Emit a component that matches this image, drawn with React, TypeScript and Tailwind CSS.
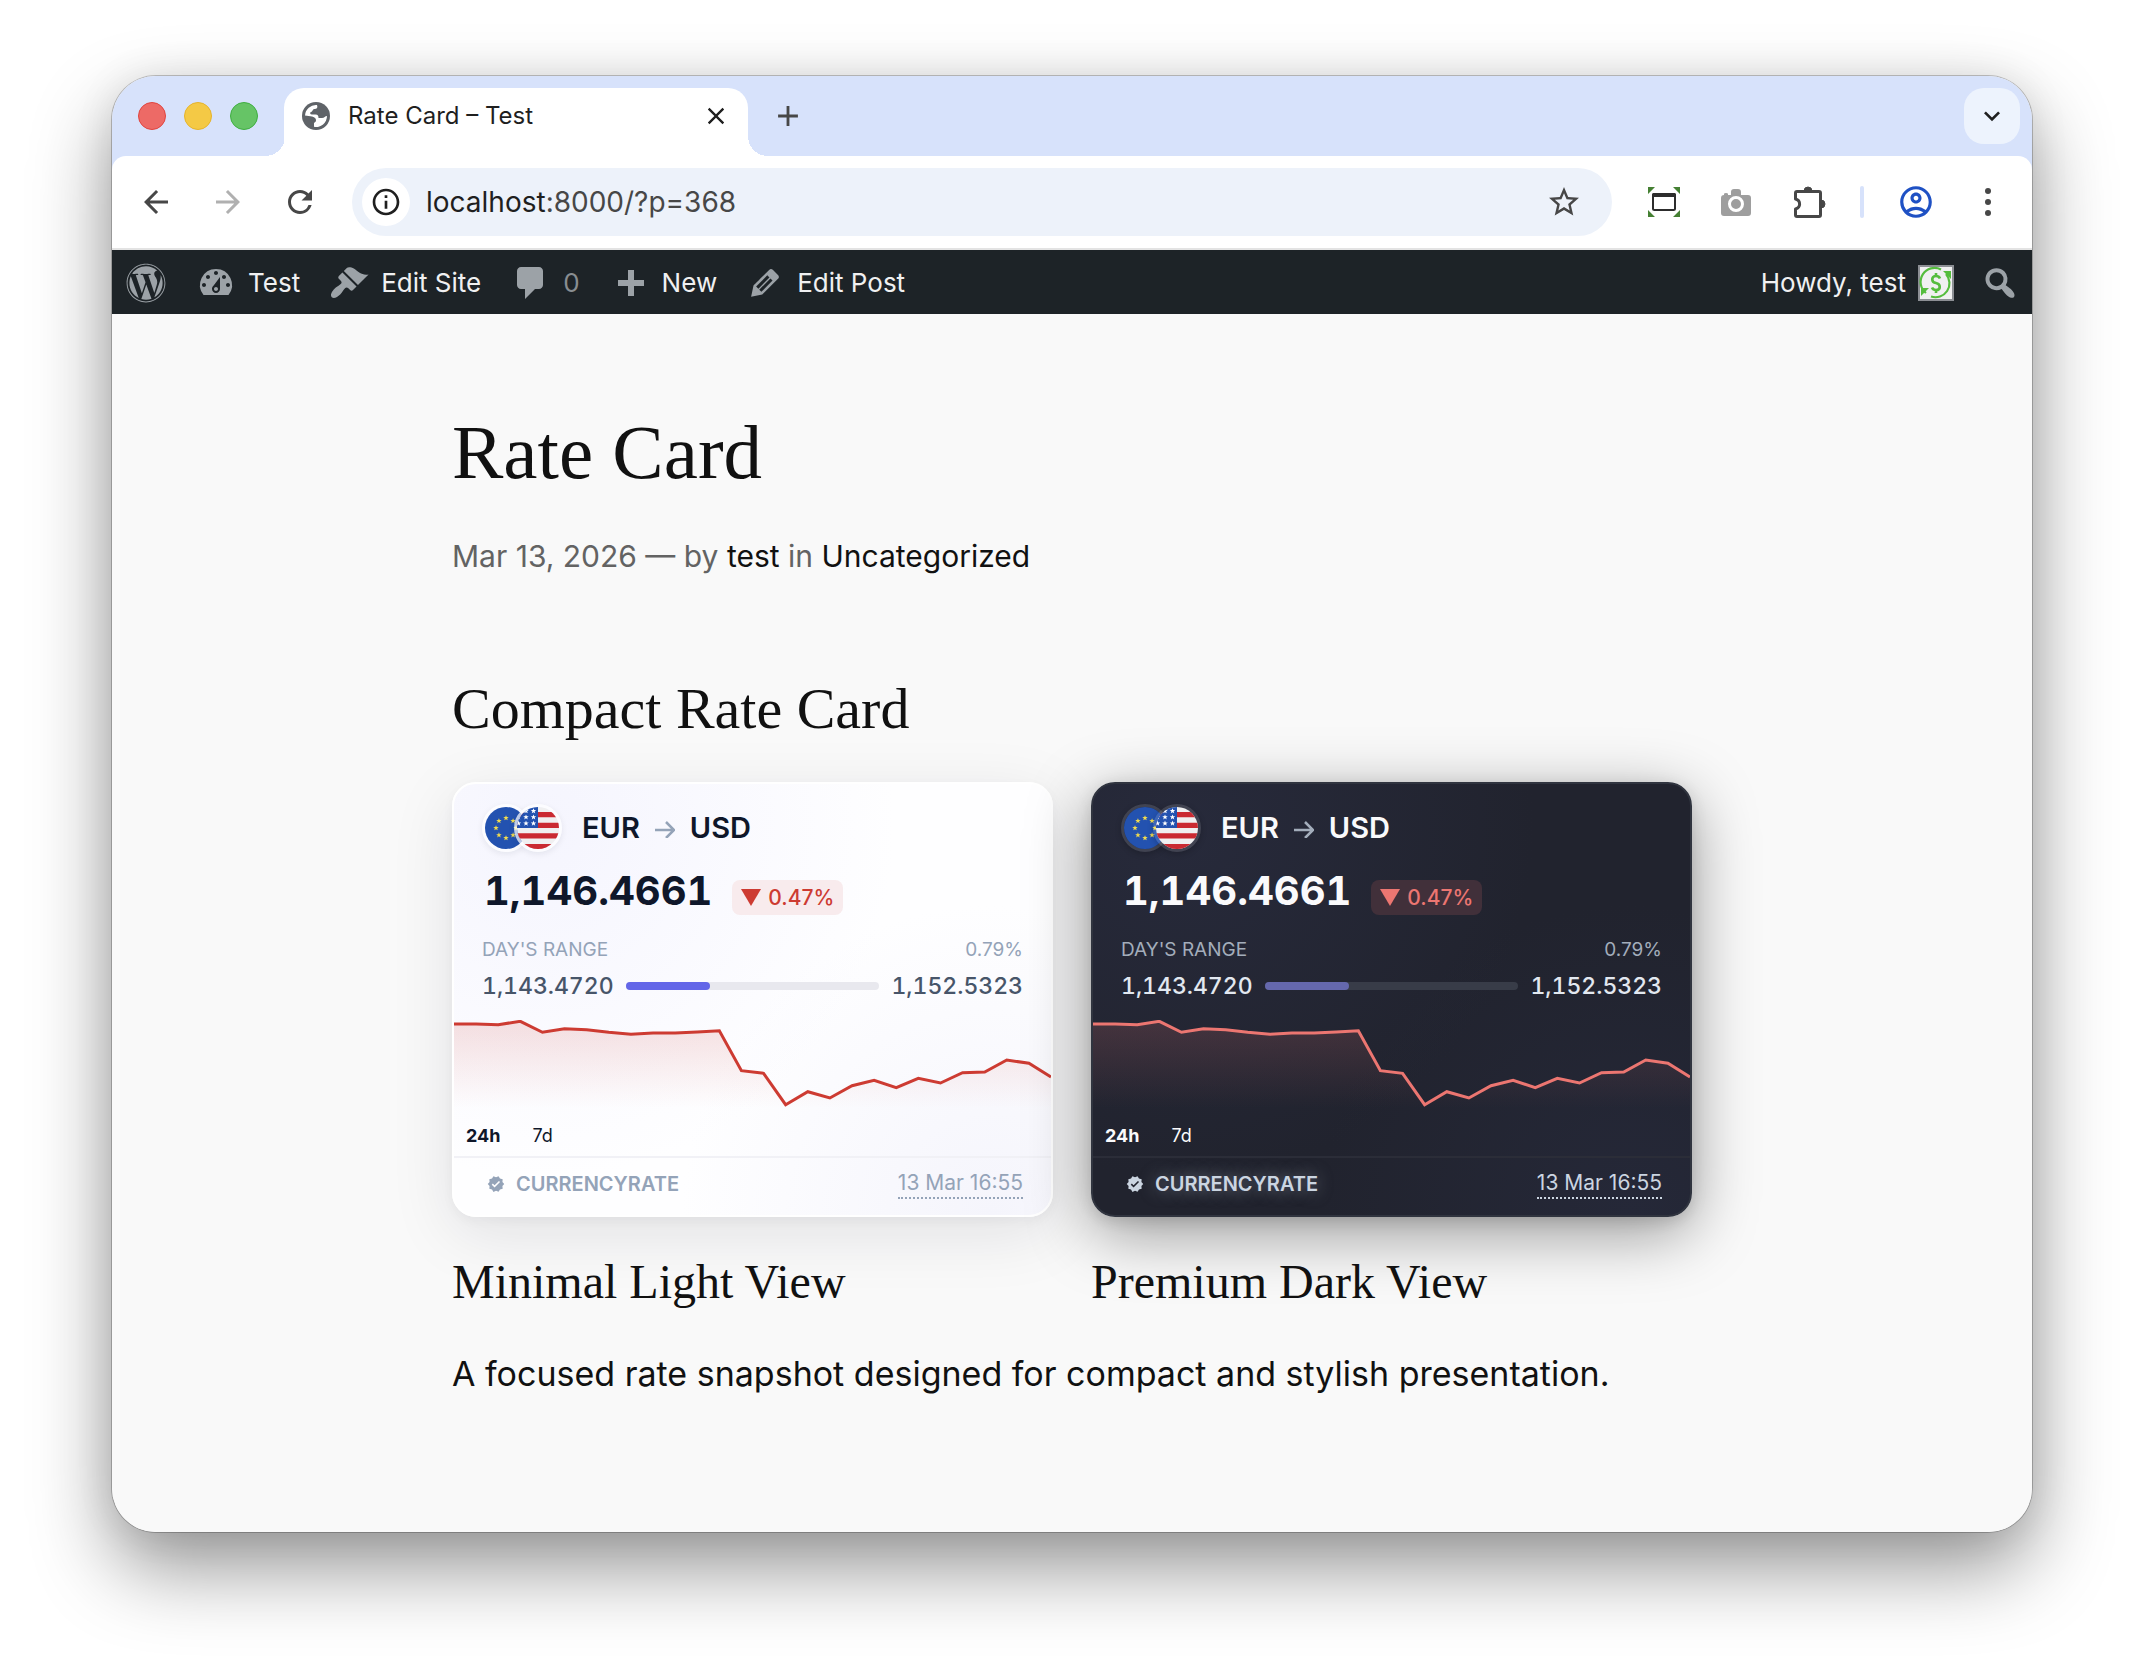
import React, { useId } from "react";
import { FaWordpress } from "react-icons/fa";
import {
  MdOutlineAccountCircle,
  MdArrowBack,
  MdArrowForward,
  MdRefresh,
  MdStarOutline,
  MdOutlineInfo,
  MdClose,
  MdAdd,
  MdKeyboardArrowDown,
  MdVerified,
} from "react-icons/md";

type Theme = "light" | "dark";

const DASH = {
  gauge:
    "M3.76 16h12.48A7.998 7.998 0 0 0 10 3a7.998 7.998 0 0 0-6.24 13zM10 4c.55 0 1 .45 1 1s-.45 1-1 1-1-.45-1-1 .45-1 1-1zM6 6c.55 0 1 .45 1 1s-.45 1-1 1-1-.45-1-1 .45-1 1-1zm8 0c.55 0 1 .45 1 1s-.45 1-1 1-1-.45-1-1 .45-1 1-1zm-5.37 5.55L12 7v6c0 1.1-.9 2-2 2s-2-.9-2-2c0-.57.24-1.08.63-1.45zM4 10c.55 0 1 .45 1 1s-.45 1-1 1-1-.45-1-1 .45-1 1-1zm12 0c.55 0 1 .45 1 1s-.45 1-1 1-1-.45-1-1 .45-1 1-1zm-5 3c0-.55-.45-1-1-1s-1 .45-1 1 .45 1 1 1 1-.45 1-1z",
  brush:
    "M14.48 11.06L7.41 3.99l1.5-1.5c.5-.56 2.3-.47 3.51.32 1.21.8 1.43 1.28 2.91 2.1 1.18.64 2.45 1.26 4.45.85zm-.71.71L6.7 4.7 4.93 6.47c-.39.39-.39 1.02 0 1.41l1.06 1.06c.39.39.39 1.03 0 1.42-.6.6-1.43 1.11-2.21 1.69-.35.26-.7.53-1.01.84C1.43 14.23.4 16.08 1.4 17.07c.99 1 2.84-.03 4.18-1.36.31-.31.58-.66.85-1.02.57-.78 1.08-1.61 1.69-2.21.39-.39 1.02-.39 1.41 0l1.06 1.06c.39.39 1.02.39 1.41 0z",
  comment:
    "M5 2h9c1.1 0 2 .9 2 2v7c0 1.1-.9 2-2 2h-2l-5 5v-5H5c-1.1 0-2-.9-2-2V4c0-1.1.9-2 2-2z",
  plus: "M17 8.500v3h-5v5H9v-5H4v-3h5v-5h3v5z",
  pencil:
    "M13.89 3.39l2.71 2.72c.46.46.42 1.24.03 1.64l-8.01 8.02-5.56 1.16 1.16-5.58s7.6-7.63 7.99-8.03c.39-.39 1.22-.39 1.68.07zm-2.73 2.79l-5.59 5.61 1.11 1.11 5.54-5.65zm-2.97 8.23l5.58-5.6-1.07-1.08-5.59 5.6z",
  search:
    "M12.14 4.18a5.504 5.504 0 0 1 .72 6.89c.12.1.22.21.36.31.2.16.47.36.81.59.34.24.56.39.66.47.42.31.73.57.94.78.32.32.6.65.84 1 .25.35.44.69.59 1.04.14.35.21.68.18 1-.02.32-.14.59-.36.81s-.49.34-.81.36c-.31.02-.65-.04-.99-.19-.35-.14-.7-.34-1.04-.59-.35-.24-.68-.52-1-.84-.21-.21-.47-.52-.77-.93-.1-.13-.25-.35-.47-.66-.22-.32-.4-.57-.56-.78-.16-.2-.29-.35-.44-.5a5.503 5.503 0 0 1-6.44-.98c-2.14-2.15-2.14-5.64 0-7.78a5.498 5.498 0 0 1 7.78 0zm-1.41 6.36a3.513 3.513 0 0 0 0-4.95c-1.37-1.37-3.59-1.37-4.95 0s-1.37 3.58 0 4.95c1.36 1.37 3.58 1.37 4.95 0z",
};

const Dashicon: React.FC<{ d: string }> = ({ d }) => (
  <svg viewBox="0 0 20 20" className="size-10 shrink-0 fill-[#9ca2a7]" aria-hidden>
    <path d={d} />
  </svg>
);

const GlobeIcon: React.FC = () => (
  <svg viewBox="0 0 28 28" className="size-7" aria-hidden>
    <circle cx="14" cy="14" r="14" fill="#5f6368" />
    <path
      d="M3 13.500A11 11 0 0 1 15 3c1 2.500 0 4-2.500 4-2 0-1.500 2.500-3.500 3-1.500.5-1 2.500 1 2.500h3.500c2.500 0 3 1.500 3 3.500h3.500c2.500 0 3-2 5-2A11 11 0 0 1 12 24.800V21c1.500-1 2-1.500 2-3 0-2-2-3-4-3.500-2-.5-4.500-.5-7-1z"
      fill="#fff"
    />
  </svg>
);

const TabStrip: React.FC = () => (
  <div className="flex h-20 items-end bg-[#d7e2fb] pr-3">
    <div className="flex h-20 items-center gap-[18px] pl-[26px] pr-5">
      <button aria-label="Close window" className="size-7 rounded-full border border-[#e0443e] bg-[#ed6a66]" />
      <button aria-label="Minimize window" className="size-7 rounded-full border border-[#e5b32c] bg-[#f4c945]" />
      <button aria-label="Zoom window" className="size-7 rounded-full border border-[#3fae41] bg-[#66c466]" />
    </div>
    <div className="-mr-px -ml-[13px] size-5 bg-[radial-gradient(circle_at_0_0,#d7e2fb_20px,#fff_20px)]" />
    <div className="flex h-[68px] w-[464px] items-center rounded-t-[20px] bg-white px-[18px] pb-3">
      <GlobeIcon />
      <span className="ml-[18px] grow text-[24px] leading-8 text-[#1f1f1f]">Rate Card – Test</span>
      <button aria-label="Close tab" className="flex size-7 items-center justify-center text-[#1f1f1f]">
        <MdClose className="size-7" />
      </button>
    </div>
    <div className="size-5 bg-[radial-gradient(circle_at_100%_0,#d7e2fb_20px,#fff_20px)]" />
    <button aria-label="New tab" className="mb-6 ml-1 flex size-8 items-center justify-center text-[#474747]">
      <MdAdd className="size-[34px] shrink-0" />
    </button>
    <button
      aria-label="Search tabs"
      className="mb-3 ml-auto flex size-14 items-center justify-center rounded-[20px] bg-[#edf3fd] text-[#1f1f1f]"
    >
      <MdKeyboardArrowDown className="size-8" />
    </button>
  </div>
);

const CaptureIcon: React.FC = () => (
  <svg viewBox="0 0 32 30" className="h-[30px] w-8" aria-hidden>
    <path d="M0 0h7L0 7zM32 0v7l-7-7zM0 30v-7l7 7zM32 30h-7l7-7z" fill="#458033" />
    <rect x="5" y="7" width="22" height="16" rx="1.500" fill="none" stroke="#2d2d2d" strokeWidth="2" />
    <path d="M4 7.500a1.500 1.500 0 0 1 1.500-1.500h21a1.500 1.500 0 0 1 1.500 1.500V10H4z" fill="#2d2d2d" />
  </svg>
);

const CameraIcon: React.FC = () => (
  <svg viewBox="0 0 30 27" className="h-[27px] w-[30px]" aria-hidden>
    <path
      d="M3 6V5q0-1 2-1t2 1v1h3V3q0-3 3-3h4q3 0 3 3v3h7q3 0 3 3v15q0 3-3 3H3q-3 0-3-3V9q0-3 3-3z"
      fill="#9e9e9e"
    />
    <circle cx="15" cy="15" r="6.500" fill="#9e9e9e" stroke="#fff" strokeWidth="3" />
  </svg>
);

const PuzzleIcon: React.FC = () => (
  <svg viewBox="0 0 32 32" className="size-8" aria-hidden>
    <path
      d="M1.500 13V7q0-1.500 1.500-1.500h22q1.500 0 1.500 1.500v22q0 1.500-1.500 1.500H3q-1.500 0-1.500-1.500v-6c5.500-1.500 5.500-8.500 0-10z"
      fill="none"
      stroke="currentColor"
      strokeWidth="3"
      strokeLinejoin="round"
    />
    <path d="M10 5a4 4 0 0 1 8 0zM27 14a4 4 0 0 1 0 8z" fill="currentColor" stroke="currentColor" strokeWidth="1" />
  </svg>
);

const Toolbar: React.FC = () => (
  <div className="bg-[#d7e2fb]">
    <div className="flex h-[94px] items-center rounded-t-[14px] border-b-2 border-[#e3e3e3] bg-white px-6 text-[#474747]">
      <button aria-label="Back" className="flex size-10 items-center justify-center">
        <MdArrowBack className="size-9" />
      </button>
      <button aria-label="Forward" className="ml-8 flex size-10 items-center justify-center text-[#b0b0b0]">
        <MdArrowForward className="size-9" />
      </button>
      <button aria-label="Reload" className="ml-8 flex size-10 items-center justify-center">
        <MdRefresh className="size-9" />
      </button>
      <div className="ml-8 flex h-[68px] grow items-center rounded-full bg-[#edf2fa] pl-[10px] pr-[30px]">
        <button
          aria-label="Site information"
          className="flex size-12 items-center justify-center rounded-full bg-white text-[#1f1f1f]"
        >
          <MdOutlineInfo className="size-8" />
        </button>
        <span className="ml-4 grow text-[28px] leading-10">
          <span className="text-[#1f1f1f]">localhost</span>:8000/?p=368
        </span>
        <button aria-label="Bookmark this page">
          <MdStarOutline className="size-9" />
        </button>
      </div>
      <div className="ml-9 flex items-center">
        <button aria-label="Capture">
          <CaptureIcon />
        </button>
        <button aria-label="Camera" className="ml-[41px]">
          <CameraIcon />
        </button>
        <button aria-label="Extensions" className="ml-[43px]">
          <PuzzleIcon />
        </button>
        <span className="ml-[34px] h-8 w-1 rounded-full bg-[#d7e2fb]" />
        <button aria-label="Profile" className="ml-[33px] text-[#1f51c4]">
          <MdOutlineAccountCircle className="size-[38px]" />
        </button>
        <button aria-label="Menu" className="mr-[17px] ml-[50px]">
          <svg viewBox="0 0 6 28" className="h-7 w-[6px] fill-current" aria-hidden>
            <circle cx="3" cy="3" r="3" />
            <circle cx="3" cy="14" r="3" />
            <circle cx="3" cy="25" r="3" />
          </svg>
        </button>
      </div>
    </div>
  </div>
);

const AdminBar: React.FC = () => (
  <nav className="flex h-16 items-center bg-[#1d2327] pt-[2px] pr-3 pl-[14px] text-[26px] leading-10 text-[#f0f0f1]">
    <a href="#wp" aria-label="About WordPress">
      <FaWordpress className="size-10 text-[#9ca2a7]" />
    </a>
    <a href="#site" className="ml-[30px] flex items-center gap-3">
      <Dashicon d={DASH.gauge} />
      Test
    </a>
    <a href="#edit-site" className="ml-[29px] flex items-center gap-3">
      <Dashicon d={DASH.brush} />
      Edit Site
    </a>
    <a href="#comments" className="ml-[30px] flex items-center gap-3 text-[#888d91]">
      <Dashicon d={DASH.comment} />0
    </a>
    <a href="#new" className="ml-[30px] flex items-center gap-3">
      <Dashicon d={DASH.plus} />
      New
    </a>
    <a href="#edit-post" className="ml-7 flex items-center gap-3">
      <Dashicon d={DASH.pencil} />
      Edit Post
    </a>
    <a href="#account" className="ml-auto flex items-center gap-3">
      Howdy, test
      <svg viewBox="0 0 36 36" className="size-9" aria-hidden>
        <rect x="1" y="1" width="34" height="34" fill="#f0f0f1" stroke="#8c8f94" strokeWidth="2" />
        <g fill="none" stroke="#55bd3e" strokeWidth="2.200">
          <path d="M8 28A14 14 0 0 1 23 4.500M28 9A14 14 0 0 1 13 31.500" />
          <path
            d="M22 13.500q-1-2.500-4-2.500c-5 0-5 6 0 7s5 7 0 7q-3 0-4-2.500M18 8v3M18 25v3"
            strokeWidth="2.600"
          />
        </g>
        <path d="M25 6l8 0v8zM3 23h8L3 31z" fill="#55bd3e" />
      </svg>
    </a>
    <button aria-label="Search" className="ml-[26px]">
      <Dashicon d={DASH.search} />
    </button>
  </nav>
);

const STAR = "M0-2.800l.75 1.900h2l-1.600 1.250.6 2L0 1.150l-1.750 1.200.6-2-1.600-1.250h2z";

const EuFlag: React.FC = () => (
  <svg viewBox="0 0 42 42" className="size-[42px]" aria-hidden>
    <circle cx="21" cy="21" r="21" fill="#2352b0" />
    {[0, 45, 90, 135, 180, 225, 270, 315].map((a) => (
      <path
        key={a}
        d={STAR}
        fill="#f2dc4e"
        transform={`translate(${21 + 10 * Math.sin((a * Math.PI) / 180)} ${21 - 10 * Math.cos((a * Math.PI) / 180)})`}
      />
    ))}
  </svg>
);

const UsFlag: React.FC<{ id: string }> = ({ id }) => (
  <svg viewBox="0 0 42 42" className="size-[42px]" aria-hidden>
    <clipPath id={id}>
      <circle cx="21" cy="21" r="21" />
    </clipPath>
    <g clipPath={`url(#${id})`}>
      <path d="M0 0h42v42H0z" fill="#f0f0f1" />
      <path d="M0 5h42v5.300H0zM0 15.700h42V21H0zM0 26.300h42v5.300H0zM0 37h42v5H0z" fill="#ca2a32" />
      <path d="M0 0h21v21H0z" fill="#2352b0" />
      {[4, 10.2, 16.4].map((y) =>
        [1.5, 9, 16.5].map((x) => (
          <path key={`${x}-${y}`} d={STAR} fill="#fff" transform={`translate(${x} ${y})`} />
        ))
      )}
    </g>
  </svg>
);

const SAMPLES = [
  24, 24, 24.7, 21.3, 32.3, 28.7, 29.7, 32.3, 34.3, 33, 33, 32, 30.7, 70.7, 73.3, 104.7, 91.7, 98, 85.7, 80.3, 87.7,
  78.3, 83, 72.7, 72, 60, 63.3, 77,
];

const Sparkline: React.FC<{ theme: Theme }> = ({ theme }) => {
  const id = useId();
  const line = SAMPLES.map((y, i) => `${((i * 598) / (SAMPLES.length - 1)).toFixed(1)},${(y - 20).toFixed(1)}`).join(" L");
  const color = theme === "dark" ? "#ec7671" : "#cd3b32";
  return (
    <svg viewBox="0 0 598 88" preserveAspectRatio="none" className="block h-[88px] w-full" aria-hidden>
      <defs>
        <linearGradient id={id} x1="0" y1="0" x2="0" y2="1">
          <stop offset="0" stopColor={color} stopOpacity={theme === "dark" ? 0.17 : 0.15} />
          <stop offset="1" stopColor={color} stopOpacity="0" />
        </linearGradient>
      </defs>
      <path d={`M${line} L598,88 L0,88 Z`} fill={`url(#${id})`} />
      <path d={`M${line}`} fill="none" stroke={color} strokeWidth="3" strokeLinejoin="miter" />
    </svg>
  );
};

const THEMES = {
  light: {
    card: "border-white bg-[radial-gradient(circle_at_15%_10%,#f5f5fe,transparent_55%),radial-gradient(circle_at_90%_100%,#f5f5fc,transparent_45%),linear-gradient(#fefeff,#fefeff)] shadow-[0_16px_64px_rgba(15,23,42,0.10),0_4px_12px_rgba(15,23,42,0.04)]",
    ink: "text-[#0f172a]",
    muted: "text-[#94a3b8]",
    value: "text-[#475569]",
    ring: "border-white/70 shadow-[0_2px_6px_rgba(15,23,42,0.08)]",
    badge: "bg-[#f8ebed] text-[#cd3b32]",
    track: "bg-[#e8e8ee]",
    fill: "bg-[#6366e8]",
    rule: "border-[#f1f1f6]",
    brand: "text-[#94a3b8]",
    date: "border-[#94a3b8] text-[#94a3b8]",
  },
  dark: {
    card: "border-[#30343f] bg-[radial-gradient(circle_at_15%_10%,#272a3b,transparent_55%),radial-gradient(circle_at_90%_100%,#252838,transparent_45%),linear-gradient(#21232e,#21232e)] shadow-[0_16px_64px_rgba(0,0,0,0.40),0_4px_16px_rgba(0,0,0,0.12)]",
    ink: "text-[#fafafc]",
    muted: "text-[#a3adbb]",
    value: "text-[#e2e8f0]",
    ring: "border-white/12 shadow-[0_2px_6px_rgba(0,0,0,0.2)]",
    badge: "bg-[#41303a] text-[#ec7671]",
    track: "bg-[#383c48]",
    fill: "bg-[#6568ad]",
    rule: "border-[#2b2d38]",
    brand: "text-[#cbd5e1] [text-shadow:0_0_16px_rgba(203,213,225,0.5)]",
    date: "border-[#cbd5e1] text-[#cbd5e1]",
  },
};

const RateCard: React.FC<{ theme: Theme }> = ({ theme }) => {
  const t = THEMES[theme];
  return (
    <section className={`overflow-hidden rounded-[24px] border-2 ${t.card}`}>
      <div className="px-7 pt-5">
        <div className="flex items-center">
          <div className="flex">
            <span className={`rounded-full border-3 ${t.ring}`}>
              <EuFlag />
            </span>
            <span className={`relative -ml-4 rounded-full border-3 ${t.ring}`}>
              <UsFlag id={`us-${theme}`} />
            </span>
          </div>
          <p className={`ml-5 flex items-center gap-[15px] text-[29px] leading-10 font-semibold ${t.ink}`}>
            EUR
            <svg viewBox="0 0 20 20" className={`size-5 ${t.muted}`} aria-label="to">
              <path d="M0 12h18M11 4l8 8-8 8" fill="none" stroke="currentColor" strokeWidth="2.500" />
            </svg>
            USD
          </p>
        </div>
        <div className="mt-3 flex items-end gap-5 pl-[2px]">
          <span className={`text-[40px] leading-[54px] font-bold tabular-nums ${t.ink}`}>1,146.4661</span>
          <span
            className={`mb-[3px] flex items-center gap-[7px] rounded-lg px-[9px] text-[21px] leading-[35px] font-medium ${t.badge}`}
          >
            <svg viewBox="0 0 20 17" className="h-[17px] w-5 fill-current" aria-label="down">
              <path d="M0 0h20L10 17z" />
            </svg>
            0.47%
          </span>
        </div>
        <div className={`mt-5 flex justify-between text-[19px] leading-6 ${t.muted}`}>
          <span>DAY'S RANGE</span>
          <span>0.79%</span>
        </div>
        <div className={`mt-[10px] flex items-center gap-3 text-[23px] leading-7 font-medium tabular-nums ${t.value}`}>
          <span>1,143.4720</span>
          <span className={`h-2 grow rounded-full ${t.track}`}>
            <span className={`block h-2 w-1/3 rounded-full ${t.fill}`} />
          </span>
          <span>1,152.5323</span>
        </div>
      </div>
      <div className="mt-5">
        <Sparkline theme={theme} />
      </div>
      <div className={`flex gap-8 px-3 pt-4 pb-2 text-[18px] leading-6 ${t.ink}`}>
        <button className="font-bold">24h</button>
        <button>7d</button>
      </div>
      <footer className={`flex items-center justify-between border-t-2 px-7 pt-[11px] pb-4 ${t.rule}`}>
        <a href="#currencyrate" className={`flex items-center gap-[11px] pl-[5px] text-[20px] leading-7 font-semibold ${t.brand}`}>
          <MdVerified className="size-[18px]" />
          CURRENCYRATE
        </a>
        <time className={`border-b-2 border-dotted text-[21px] leading-7 ${t.date}`}>13 Mar 16:55</time>
      </footer>
    </section>
  );
};

const App: React.FC = () => {
  return (
    <div className="min-h-screen bg-white px-28 pt-[76px] pb-[148px] font-['Inter','Liberation_Sans',sans-serif]">
      <div className="overflow-hidden rounded-[44px] shadow-[0_0_0_1px_rgba(0,0,0,0.22),0_36px_80px_rgba(0,0,0,0.42),0_0_40px_rgba(0,0,0,0.08)]">
        <TabStrip />
        <Toolbar />
        <AdminBar />
        <main className="bg-[#f9f9f9] pt-[92px] pb-[133px] text-[#111]">
          <div className="mx-auto max-w-[1240px]">
            <h1 className="font-['Liberation_Serif',serif] text-[77px] leading-[92px]">Rate Card</h1>
            <p className="mt-[38px] text-[30px] leading-10 text-[#636363]">
              Mar 13, 2026 — by{" "}
              <a href="#author" className="text-[#111]">
                test
              </a>{" "}
              in{" "}
              <a href="#uncategorized" className="text-[#111]">
                Uncategorized
              </a>
            </p>
            <h2 className="mt-[98px] font-['Liberation_Serif',serif] text-[58px] leading-[70px]">Compact Rate Card</h2>
            <div className="mt-[38px] grid grid-cols-2 gap-x-[38px] gap-y-9">
              <RateCard theme="light" />
              <RateCard theme="dark" />
              <h3 className="font-['Liberation_Serif',serif] text-[48px] leading-[58px]">Minimal Light View</h3>
              <h3 className="font-['Liberation_Serif',serif] text-[48px] leading-[58px]">Premium Dark View</h3>
            </div>
            <p className="mt-[38px] text-[34px] leading-[50px]">
              A focused rate snapshot designed for compact and stylish presentation.
            </p>
          </div>
        </main>
      </div>
    </div>
  );
};

export default App;
